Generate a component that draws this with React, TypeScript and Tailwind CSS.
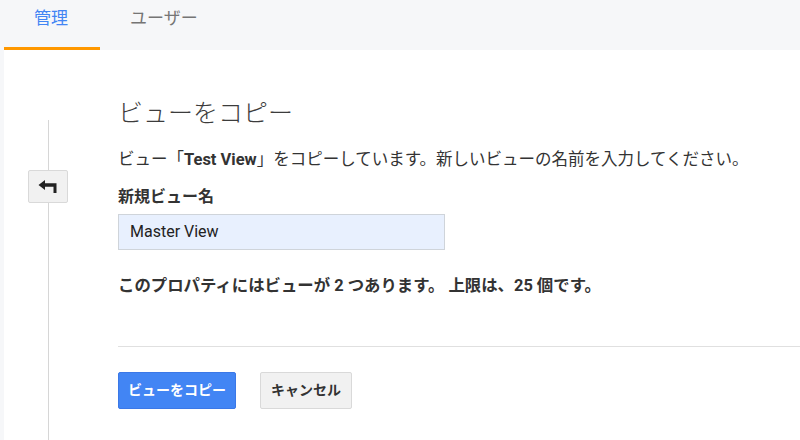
import React from 'react';

const font = { fontFamily: 'Roboto, "Noto Sans CJK JP", sans-serif' };

export default function App() {
  return (
    <div className="w-[800px] h-[440px] overflow-hidden bg-[#f6f7f9] text-[#333]" style={font}>
      <div className="flex h-[50px]">
        <div className="w-[4px]" />
        <div className="w-[96px] flex flex-col">
          <div className="flex-1 flex items-center pl-[30px] pb-[10px] text-[17px] text-[#4285f4]">管理</div>
          <div className="h-[3px] bg-[#ff9800]" />
        </div>
        <div className="flex items-center pl-[30px] pb-[13px] text-[17px] text-[#757575]">ユーザー</div>
      </div>
      <div className="ml-[4px] h-[390px] bg-white flex">
        <div className="w-[114px] relative shrink-0">
          <div className="absolute left-[44px] top-[70px] bottom-0 w-px bg-[#d6d6d6]" />
          <button className="absolute left-[24px] top-[120px] w-[40px] h-[33px] bg-[#f1f1f1] border border-[#d9d9d9] rounded-[2px] flex items-center justify-center">
            <svg width="20" height="14" viewBox="0 0 20 14">
              <path d="M0.5 5 L7 0 L7 3.3 L18.5 3.3 L18.5 13 L15.5 13 L15.5 6.7 L7 6.7 L7 10 Z" fill="#222" />
            </svg>
          </button>
        </div>
        <div className="flex-1 pt-[48px]">
          <h1 className="text-[25px] font-light leading-[32px] text-[#3c3c3c]">ビューをコピー</h1>
          <p className="mt-[19px] text-[16.5px] leading-[22px] text-[#333]">
            ビュー「<span className="font-bold">Test View</span>」をコピーしています。新しいビューの名前を入力してください。
          </p>
          <div className="mt-[15px] text-[16px] font-bold leading-[22px]">新規ビュー名</div>
          <div className="mt-[6px] w-[327px] h-[36px] bg-[#e8f0fe] border border-[#cfd4da] flex items-center pl-[11px] text-[16px] text-[#222]">
            Master View
          </div>
          <div className="mt-[25px] text-[16.4px] font-bold leading-[22px]">
            このプロパティにはビューが 2 つあります。 上限は、25 個です。
          </div>
          <div className="mt-[49px] h-px bg-[#e0e0e0]" />
          <div className="mt-[25px] flex gap-[24px]">
            <button className="w-[118px] h-[37px] bg-[#4285f4] rounded-[2px] border border-[#3b78e7] text-white text-[14px] font-bold">ビューをコピー</button>
            <button className="w-[92px] h-[37px] bg-[#f1f1f1] rounded-[2px] border border-[#d9d9d9] text-[#333] text-[14px] font-bold">キャンセル</button>
          </div>
        </div>
      </div>
    </div>
  );
}
